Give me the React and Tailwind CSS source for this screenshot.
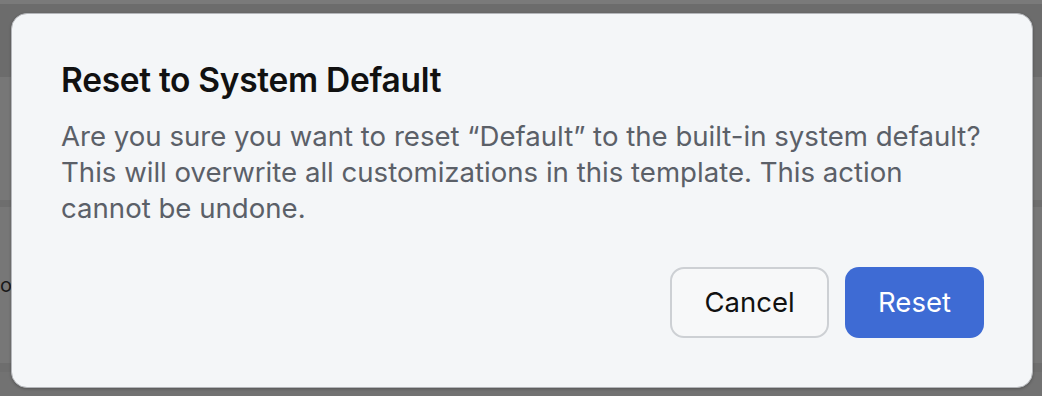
import React from "react";

const font = { fontFamily: "Inter, 'Noto Sans', sans-serif" };

const ResetDialog = () => {
  return (
    <div
      role="dialog"
      className="absolute left-[11px] top-[13px] w-[1022px] h-[375px] rounded-[16px] border border-[#b4b6ba] bg-[#f4f6f8] shadow-[0_1px_3px_rgba(0,0,0,0.25)] pl-[49px] pr-[48px] pt-[46px] pb-[49px] flex flex-col"
    >
      <h2 className="text-[33.5px] leading-[40px] font-semibold tracking-[-0.3px] text-[#111111]">
        Reset to System Default
      </h2>
      <p className="mt-[18px] text-[27.6px] leading-[36px] text-[#5b6068]">
        Are you sure you want to reset “Default” to the built-in system default?
        <br />
        This will overwrite all customizations in this template. This action
        <br />
        cannot be undone.
      </p>
      <div className="mt-auto flex justify-end gap-[16px]">
        <button className="w-[159px] h-[71px] rounded-[14px] border-2 border-[#cdd0d4] bg-[#f7f8f9] text-[27.5px] text-[#111111]">
          Cancel
        </button>
        <button className="w-[139px] h-[71px] rounded-[14px] bg-[#3e6bd4] text-[27.5px] text-white">
          Reset
        </button>
      </div>
    </div>
  );
};

export default function App() {
  return (
    <div className="relative w-[1042px] h-[396px] overflow-hidden bg-[#777777]" style={font}>
      {/* page behind the overlay */}
      <div className="flex flex-col h-full">
        <div className="h-[4px] bg-[#7a7a7a]" />
        <div className="h-[73px] bg-[#6c6c6c]" />
        <div className="h-[123px] bg-[#777777]" />
        <div className="h-[7px] bg-[#6e6e6e]" />
        <div className="h-[156px] bg-[#777777] flex items-center">
          <span className="text-[20px] text-[#1a1a1a]">o</span>
        </div>
        <div className="h-[9px] bg-[#6e6e6e]" />
        <div className="flex-1 bg-[#727272]" />
      </div>
      <ResetDialog />
    </div>
  );
}
